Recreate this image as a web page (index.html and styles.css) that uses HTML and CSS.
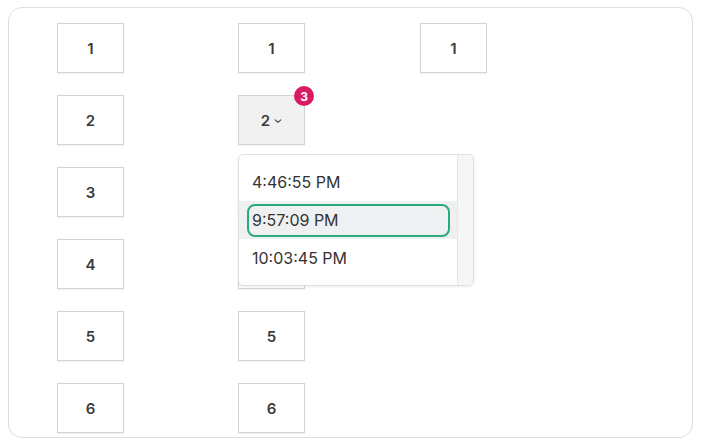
FILE: index.html
```html
<!DOCTYPE html>
<html>
<head>
<meta charset="utf-8">
<link rel="stylesheet" href="styles.css">
</head>
<body>
<div class="panel">
  <div class="col">
    <div class="cell">1</div>
    <div class="cell">2</div>
    <div class="cell">3</div>
    <div class="cell">4</div>
    <div class="cell">5</div>
    <div class="cell">6</div>
  </div>
  <div class="col col-wide">
    <div class="cell">1</div>
    <div class="cell cell-open">
      <span>2</span>
      <svg class="chev" width="8" height="6" viewBox="0 0 8 6"><path d="M1.2 1.8 L4 4.4 L6.8 1.8" fill="none" stroke="#444" stroke-width="1.1" stroke-linecap="round" stroke-linejoin="round"/></svg>
      <span class="badge">3</span>
      <div class="menu">
        <div class="menu-list">
          <div class="item">4:46:55 PM</div>
          <div class="item item-active"><span class="ring"></span>9:57:09 PM</div>
          <div class="item">10:03:45 PM</div>
        </div>
        <div class="menu-scroll"></div>
      </div>
    </div>
    <div class="cell">3</div>
    <div class="cell">4</div>
    <div class="cell">5</div>
    <div class="cell">6</div>
  </div>
  <div class="col">
    <div class="cell">1</div>
  </div>
</div>
</body>
</html>
```
FILE: styles.css
```css
html, body {
  margin: 0;
  padding: 0;
  background: #ffffff;
}
body {
  font-family: Inter, "Liberation Sans", sans-serif;
  color: #333;
}
.panel {
  margin: 7px 0 0 8px;
  width: 685px;
  height: 431px;
  box-sizing: border-box;
  border: 1px solid #dedede;
  border-radius: 14px;
  padding: 15px 0 0 48px;
  display: flex;
}
.col {
  width: 181px;
  display: flex;
  flex-direction: column;
  gap: 22px;
}
.col-wide {
  width: 182px;
}
.cell {
  position: relative;
  width: 67px;
  height: 50px;
  box-sizing: border-box;
  border: 1px solid #d3d3d3;
  box-shadow: 0 1px 1px rgba(0,0,0,0.05);
  background: #fff;
  display: flex;
  align-items: center;
  justify-content: center;
  font-size: 15px;
  font-weight: 600;
  color: #3a3a3a;
}
.cell-open {
  background: #f1f1f1;
  z-index: 2;
}
.chev {
  margin-left: 4px;
  margin-top: 2px;
}
.badge {
  position: absolute;
  top: -10px;
  right: -10px;
  width: 20px;
  height: 20px;
  border-radius: 50%;
  background: #d81c63;
  color: #fff;
  font-size: 12px;
  font-weight: 700;
  display: flex;
  align-items: center;
  justify-content: center;
}
.menu {
  position: absolute;
  top: 58px;
  left: -1px;
  width: 236px;
  height: 132px;
  box-sizing: border-box;
  border: 1px solid #e0e0e0;
  border-radius: 5px;
  background: #fff;
  box-shadow: 0 1px 3px rgba(0,0,0,0.08);
  display: flex;
  overflow: hidden;
  font-weight: 400;
}
.menu-list {
  flex: 1;
  padding: 8px 0;
  display: flex;
  flex-direction: column;
}
.item {
  position: relative;
  height: 38px;
  padding-left: 13px;
  display: flex;
  align-items: center;
  font-size: 16px;
  color: #333;
  white-space: nowrap;
}
.item-active {
  background: #eff0f1;
}
.ring {
  position: absolute;
  top: 3px;
  bottom: 2px;
  left: 8px;
  right: 7px;
  border: 2px solid #2aaa80;
  border-radius: 8px;
}
.menu-scroll {
  width: 15px;
  border-left: 1px solid #e6e6e6;
  background: #f6f6f6;
}
```
